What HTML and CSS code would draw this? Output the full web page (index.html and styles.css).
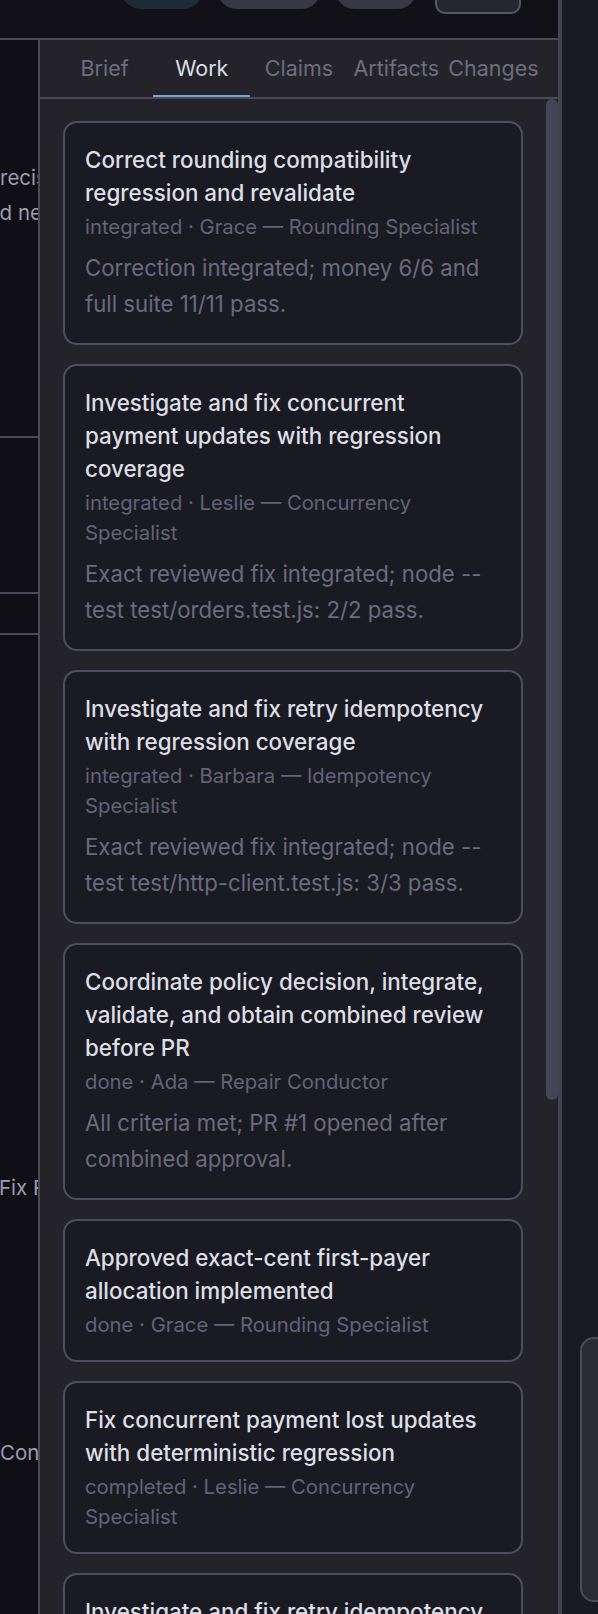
FILE: index.html
```html
<!DOCTYPE html>
<html>
    <head>
        <meta charset="utf-8">
        <link rel="stylesheet" href="styles.css">
    </head>
    <body>
        <div class="main">
            <div class="topbar">
                <div class="pill teal"></div>
                <div class="pill grey wide"></div>
                <div class="pill grey"></div>
                <div class="outlined"></div>
            </div>
            <div class="workspace">
                <div class="leftcol">
                    <div class="lblock first">
                        <div class="ltext">recisi</div>
                        <div class="ltext shift">and ne</div>
                    </div>
                    <div class="lblock second"></div>
                    <div class="lblock third"></div>
                    <div class="lblock fourth">
                        <div class="ltext fix">Fix Ro</div>
                    </div>
                    <div class="lblock fifth">
                        <div class="ltext con">Conc</div>
                    </div>
                </div>
                <div class="panel">
                    <div class="tabs">
                        <div class="tab">Brief</div>
                        <div class="tab active">Work</div>
                        <div class="tab">Claims</div>
                        <div class="tab">Artifacts</div>
                        <div class="tab">Changes</div>
                    </div>
                    <div class="body">
                        <div class="list">
                            <div class="card">
                                <div class="title">Correct rounding compatibility regression and revalidate</div>
                                <div class="meta">integrated · Grace — Rounding Specialist</div>
                                <div class="desc">Correction integrated; money 6/6 and full suite 11/11 pass.</div>
                            </div>
                            <div class="card">
                                <div class="title">Investigate and fix concurrent payment updates with regression coverage</div>
                                <div class="meta">integrated · Leslie — Concurrency Specialist</div>
                                <div class="desc">Exact reviewed fix integrated; node --<wbr>test test/orders.test.js: 2/2 pass.</div>
                            </div>
                            <div class="card">
                                <div class="title">Investigate and fix retry idempotency with regression coverage</div>
                                <div class="meta">integrated · Barbara — Idempotency Specialist</div>
                                <div class="desc">Exact reviewed fix integrated; node --<wbr>test test/http-client.test.js: 3/3 pass.</div>
                            </div>
                            <div class="card">
                                <div class="title">Coordinate policy decision, integrate, validate, and obtain combined review before PR</div>
                                <div class="meta">done · Ada — Repair Conductor</div>
                                <div class="desc">All criteria met; PR #1 opened after combined approval.</div>
                            </div>
                            <div class="card">
                                <div class="title">Approved exact-cent first-payer allocation implemented</div>
                                <div class="meta">done · Grace — Rounding Specialist</div>
                            </div>
                            <div class="card">
                                <div class="title">Fix concurrent payment lost updates with deterministic regression</div>
                                <div class="meta">completed · Leslie — Concurrency Specialist</div>
                            </div>
                            <div class="card">
                                <div class="title">Investigate and fix retry idempotency with deterministic regression</div>
                                <div class="meta">completed · Barbara — Idempotency Specialist</div>
                            </div>
                        </div>
                        <div class="track">
                            <div class="thumb"></div>
                        </div>
                    </div>
                </div>
            </div>
        </div>
        <div class="side">
            <div class="ghost"></div>
        </div>
    </body>
</html>
```

FILE: styles.css
```css
*{
    box-sizing: border-box;
    margin: 0px;
    padding: 0px;
}
body
{
    display: flex;
    height: 1614px;
    overflow: hidden;
    background-color: #1a1a24;
    font-family: "Inter", "Noto Sans", sans-serif;
}
.main
{
    width: 562px;
    flex-shrink: 0;
    display: flex;
    flex-direction: column;
    border-right: 4px solid #434351;
}
/* top toolbar, buttons are cut by the window edge */
.topbar
{
    height: 40px;
    background-color: #111117;
    border-bottom: 2px solid #4b4b58;
    display: flex;
    justify-content: flex-end;
    align-items: flex-end;
    padding-right: 37px;
    padding-bottom: 29px;
}
.pill
{
    width: 82px;
    height: 40px;
    border-radius: 20px;
    margin-left: 14px;
    flex-shrink: 0;
}
.pill.wide
{
    width: 104px;
}
.teal
{
    background-color: #1d2b37;
}
.grey
{
    background-color: #383843;
}
.outlined
{
    width: 86px;
    height: 40px;
    margin-left: 18px;
    margin-bottom: -5px;
    border-radius: 10px;
    background-color: #26262f;
    border: 2px solid #565665;
    flex-shrink: 0;
}
.workspace
{
    flex: 1;
    display: flex;
    min-height: 0;
}
.leftcol
{
    width: 40px;
    flex-shrink: 0;
    background-color: #100f15;
    border-right: 2px solid #4b4b58;
    overflow: hidden;
    color: #9d9dab;
    font-size: 20.5px;
    line-height: 35px;
}
.lblock
{
    border-bottom: 2px solid #4b4b58;
    white-space: nowrap;
}
.lblock.first
{
    height: 398px;
    padding-top: 120px;
}
.lblock.second
{
    height: 156px;
}
.lblock.third
{
    height: 41px;
}
.lblock.fourth
{
    height: 800px;
    border-bottom: none;
    padding-top: 535px;
}
.lblock.fifth
{
    border-bottom: none;
    padding-top: 0px;
}
.ltext.shift
{
    margin-left: -24px;
}
.ltext.fix
{
    margin-left: -1px;
}
.ltext.con
{
    margin-left: 0px;
}
.panel
{
    flex: 1;
    display: flex;
    flex-direction: column;
    background-color: #232329;
    min-width: 0;
}
.tabs
{
    display: flex;
    height: 59px;
    padding: 0px 16px;
    border-bottom: 2px solid #4b4b58;
}
.tab
{
    flex: 1;
    display: flex;
    align-items: center;
    justify-content: center;
    font-size: 21.5px;
    color: #6e6e7f;
    white-space: nowrap;
    border-bottom: 2px solid transparent;
}
.tab.active
{
    color: #dcdce4;
    border-bottom-color: #6ea7d2;
}
.body
{
    flex: 1;
    display: flex;
    min-height: 0;
}
.list
{
    flex: 1;
    padding: 22px 23px;
    display: flex;
    flex-direction: column;
    gap: 19px;
    overflow: hidden;
}
.card
{
    background-color: #1a1a23;
    border: 2px solid #4e4e5e;
    border-radius: 14px;
    padding: 20px 20px 20px 20px;
    flex-shrink: 0;
}
.title
{
    font-size: 22.4px;
    font-weight: 500;
    line-height: 33px;
    color: #dedee6;
}
.meta
{
    margin-top: 3px;
    font-size: 20.3px;
    line-height: 30px;
    color: #636377;
}
.desc
{
    margin-top: 8px;
    margin-bottom: 1px;
    font-size: 22.2px;
    line-height: 36px;
    color: #6b6b7d;
}
.track
{
    width: 12px;
    flex-shrink: 0;
}
.thumb
{
    height: 1001px;
    border-radius: 6px;
    background-color: #454556;
}
.side
{
    flex: 1;
    min-width: 0;
    overflow: hidden;
    padding-top: 1337px;
    padding-left: 18px;
}
.ghost
{
    width: 60px;
    height: 265px;
    background-color: #2a2a35;
    border: 2px solid #4a4a58;
    border-radius: 14px;
}
```
